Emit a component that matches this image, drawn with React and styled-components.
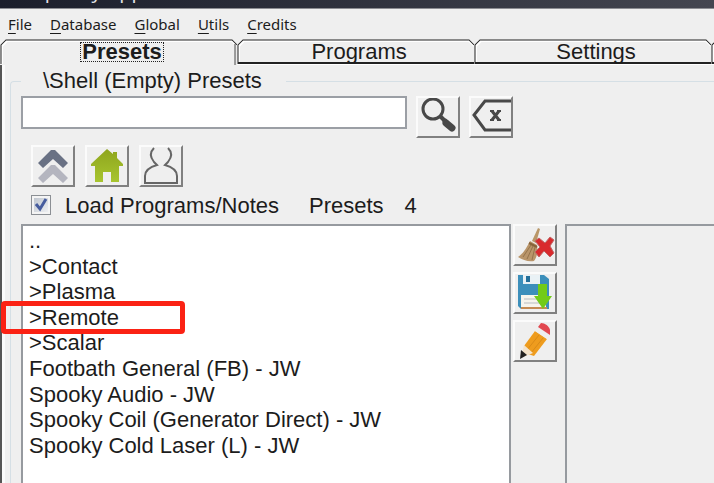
import React, { useState } from "react";
import styled, { createGlobalStyle } from "styled-components";

const GlobalStyle = createGlobalStyle`
  * {
    box-sizing: border-box;
  }
  body {
    margin: 0;
    background: #efefef;
    color: #1c1c1c;
    font-family: "Liberation Sans", Arial, sans-serif;
    font-size: 22px;
    overflow: hidden;
  }
  button {
    font: inherit;
    color: inherit;
  }
`;

const Window = styled.div`
  display: flex;
  flex-direction: column;
  height: 100vh;
`;

const TitleBar = styled.header`
  display: flex;
  align-items: flex-end;
  flex: none;
  height: 9px;
  padding: 0 16px 6px;
  overflow: hidden;
  background: linear-gradient(to right, #1b1e2b, #444650);
  border-bottom: 1px solid #8c8d92;
  color: #e4e4e8;
  font-family: "Open Sans", sans-serif;
  font-size: 20px;
  line-height: 22px;
  white-space: pre;
`;

const MenuBar = styled.nav`
  display: flex;
  flex: none;
  height: 30px;
  padding: 0 8px;
  gap: 18px;
  align-items: center;
`;

const MenuItem = styled.button`
  padding: 0;
  border: 0;
  background: none;
  font-family: "Noto Sans", sans-serif;
  font-size: 15px;
  line-height: 20px;
  u {
    text-underline-offset: 3px;
  }
`;

const Tabs = styled.div`
  display: flex;
  flex: none;
  height: 26px;
  overflow: hidden;
`;

const TabButton = styled.button`
  position: relative;
  flex: 0 0 33.2%;
  height: 26px;
  padding: 0 0 0 7px;
  border: 0;
  background: none;
  font-weight: ${(p) => (p.$active ? "bold" : "normal")};
  span {
    position: relative;
    display: inline-block;
    height: 18px;
    padding: 0 1px;
    line-height: 18px;
    outline: ${(p) => (p.$active ? "1px dotted #222" : "none")};
  }
`;

const TabEdge = styled.svg`
  position: absolute;
  inset: 0;
  width: 100%;
  height: 100%;
`;

const Page = styled.main`
  display: flex;
  flex: 1;
  min-height: 0;
  padding: 4px 0 0 8px;
  border-left: 2px solid #555;
  box-shadow: inset 3px 0 #fafafa;
`;

const Group = styled.fieldset`
  display: flex;
  flex-direction: column;
  flex: 1;
  min-width: 0;
  margin: 0;
  padding: 0 0 0 10px;
  border: 1px solid #d5dfe5;
  border-width: 1px 0 0 1px;
  border-radius: 4px 0 0 0;
`;

const Legend = styled.legend`
  margin: 0;
  padding: 0 24px 0 22px;
  line-height: 24px;
`;

const SearchRow = styled.div`
  display: flex;
  gap: 9px;
  align-items: flex-start;
  padding-top: 3px;
`;

const SearchInput = styled.input`
  width: 55.7%;
  height: 33px;
  border: 2px solid #9b9fa5;
  background: #fff;
  font: inherit;
  outline: none;
`;

const IconButton = styled.button`
  display: flex;
  flex: none;
  width: 44px;
  height: 42px;
  padding: 0;
  align-items: center;
  justify-content: center;
  background: #efefef;
  border: 2px solid;
  border-color: #fbfbfb #808080 #808080 #fbfbfb;
`;

const ToolRow = styled.div`
  display: flex;
  gap: 10px;
  padding: 7px 0 0 10px;
`;

const OptionsRow = styled.div`
  display: flex;
  gap: 30px;
  padding: 6px 0 6px 10px;
  line-height: 25px;
`;

const CheckLabel = styled.label`
  display: flex;
  gap: 14px;
  align-items: center;
`;

const Checkbox = styled.input`
  appearance: none;
  flex: none;
  width: 20px;
  height: 20px;
  margin: 0 0 2px;
  border: 1px solid #8b8f94;
  box-shadow: inset 0 0 0 2px #f4f4f4;
  background: linear-gradient(135deg, #b9c0ca, #f4f5f7);
  &:checked {
    background: url("data:image/svg+xml,%3Csvg xmlns='http://www.w3.org/2000/svg' viewBox='0 0 18 18'%3E%3Cpath d='M4 8l4 5 6-10' fill='none' stroke='%23465c9e' stroke-width='3'/%3E%3C/svg%3E"),
      linear-gradient(135deg, #b9c0ca, #f4f5f7);
  }
`;

const Counter = styled.div`
  display: flex;
  gap: 21px;
`;

const Panels = styled.div`
  display: flex;
  flex: 1;
  min-height: 0;
`;

const ListPanel = styled.div`
  flex: 0 0 70.7%;
  padding: 2px 6px 0;
  background: #fff;
  border: 2px solid #969a9f;
  border-bottom: 0;
`;

const PresetList = styled.ul`
  display: grid;
  grid-auto-rows: 1fr;
  min-height: 230px;
  margin: 0;
  padding: 0;
  list-style: none;
`;

const PresetRow = styled.li`
  position: relative;
  display: flex;
  align-items: center;
`;

const PresetButton = styled.button`
  padding: 0;
  border: 0;
  background: none;
  line-height: 25px;
  white-space: nowrap;
`;

const Highlight = styled.span`
  position: absolute;
  left: -28px;
  top: -4px;
  width: 184px;
  height: 33px;
  border: 5px solid #fb2214;
  border-radius: 4px;
  pointer-events: none;
`;

const SideTools = styled.div`
  display: flex;
  flex-direction: column;
  flex: none;
  gap: 6px;
  padding: 0 8px 0 2px;
`;

const Notes = styled.section`
  flex: 1;
  border: 2px solid #969a9f;
  border-width: 2px 0 0 2px;
`;

const SearchIcon = () => (
  <svg width="40" height="38" viewBox="0 0 40 38" fill="none" stroke="#484848">
    <circle cx="15" cy="11" r="10" strokeWidth="3" />
    <path d="M22 18l5 5" strokeWidth="4" />
    <path d="M26 22l3 3" strokeWidth="5" />
    <path d="M28 25l6 5" strokeWidth="7" strokeLinecap="round" />
  </svg>
);

const ClearIcon = () => (
  <svg width="40" height="38" viewBox="0 0 40 38" fill="none" stroke="#484848">
    <path d="M40 3H14L3 17l11 15h26" strokeWidth="3" />
    <path d="M21 13l7 9M28 13l-7 9" strokeWidth="3" />
    <path d="M19 13h4M26 13h4M19 22h4M26 22h4" strokeWidth="2" />
  </svg>
);

const UpIcon = () => (
  <svg width="40" height="38" viewBox="0 0 40 38">
    <path d="M5 16L18 3h4l13 13-5 5-10-9-10 9z" fill="#697184" />
    <path d="M5 31l13-13h4l13 13-5 5-10-9-10 9z" fill="#b4b5bf" />
  </svg>
);

const HomeIcon = () => (
  <svg width="40" height="38" viewBox="0 0 40 38">
    <defs>
      <linearGradient id="home" x2="0" y2="1">
        <stop stopColor="#8ea51d" />
        <stop offset="1" stopColor="#a8c52f" />
      </linearGradient>
    </defs>
    <path d="M20 2l6 5V5h4v6l6 6v2h-4v16h-8V25h-8v10H8V19H4v-2z" fill="url(#home)" />
  </svg>
);

const UserIcon = () => (
  <svg width="40" height="38" viewBox="0 0 40 38" fill="none" stroke="#666" strokeWidth="2">
    <path d="M13 1c-4 4-4 9 0 14l3 3C9 20 4 23 4 29v7h32v-7c0-6-5-9-12-11l3-3c4-5 4-10 0-14" />
  </svg>
);

const BroomIcon = () => (
  <svg width="40" height="36" viewBox="0 0 40 36">
    <path d="M23 1l2 1-4 14-4-2z" fill="#b99768" />
    <path d="M15 14l7 4c1 7 0 12-3 16-6 1-11-1-16-4 6-4 9-10 12-16z" fill="#b9956a" />
    <path d="M16 18L8 30M18 19l-6 13M20 20l-3 13" stroke="#94734b" fill="none" />
    <path d="M14 16l8 4" stroke="#86633b" strokeWidth="2" />
    <path d="M20 14l4-3 6 5 5-6 4 3-4 6 4 7-4 4-6-6-5 6-4-5 5-5z" fill="#d92a2d" stroke="#c06666" />
  </svg>
);

const SaveIcon = () => (
  <svg width="40" height="38" viewBox="0 0 40 38">
    <path d="M3 1h26l5 4v30H6l-3-3z" fill="#3c8fbb" />
    <path d="M8 1h17v9H8z" fill="#e9f1f5" />
    <path d="M11 2h4v6h-4z" fill="#246f9a" />
    <path d="M6 21h25v13H6z" fill="#f7f5ed" />
    <path d="M9 25h16M9 29h16" stroke="#b9bdc0" />
    <path d="M6 34h26" stroke="#c58c54" strokeWidth="2" />
    <path d="M23 10h9v12h5l-9 13-9-13h4z" fill="#72cb18" />
  </svg>
);

const PencilIcon = () => (
  <svg width="40" height="38" viewBox="0 0 40 38">
    <path d="M20 9l12 8-13 17-6-2-4-8z" fill="#ee9c1e" />
    <path d="M24 13L12 28M28 16L16 31" stroke="#d98a18" />
    <path d="M20 9l3-4 12 8-3 4z" fill="#eee" />
    <path d="M23 5l3-4c4 0 8 3 9 7v5z" fill="#e24850" />
    <path d="M9 23l9 8-12 5z" fill="#f3e3cb" />
    <path d="M6 28l6 5-7 4z" fill="#222" />
  </svg>
);

const menus = ["File", "Database", "Global", "Utils", "Credits"];
const tabs = ["Presets", "Programs", "Settings", ""];
const presets = [
  "..",
  ">Contact",
  ">Plasma",
  ">Remote",
  ">Scalar",
  "Footbath General (FB) - JW",
  "Spooky Audio - JW",
  "Spooky Coil (Generator Direct) - JW",
  "Spooky Cold Laser (L) - JW",
];

function Tab({ label, active, onClick }) {
  return (
    <TabButton $active={active} onClick={onClick} aria-label={label || "More"}>
      <TabEdge viewBox="0 0 237 26" preserveAspectRatio="none" fill="none">
        <path d="M2 25V7l5-5h225l5 5" stroke="#fff" strokeWidth="2" />
        <path d="M1 25V6l5-5h226l5 5" stroke="#222" />
        {active && <path d="M235 5v21" stroke="#999" strokeWidth="2" />}
        {!active && <path d="M1 24h236" stroke="#222" strokeWidth="2" />}
        {!active && <path d="M0 26h237" stroke="#fff" strokeWidth="2" />}
      </TabEdge>
      {label && <span>{label}</span>}
    </TabButton>
  );
}

export default function App() {
  const [tab, setTab] = useState("Presets");

  return (
    <>
      <GlobalStyle />
      <Window>
        <TitleBar>{"\\  Spooky App"}</TitleBar>
        <MenuBar>
          {menus.map((name) => (
            <MenuItem key={name}>
              <u>{name[0]}</u>
              {name.slice(1)}
            </MenuItem>
          ))}
        </MenuBar>
        <Tabs>
          {tabs.map((name) => (
            <Tab key={name} label={name} active={name === tab} onClick={() => setTab(name)} />
          ))}
        </Tabs>
        <Page>
          <Group>
            <Legend>\Shell (Empty) Presets</Legend>
            <SearchRow>
              <SearchInput type="text" aria-label="Search presets" />
              <IconButton aria-label="Search"><SearchIcon /></IconButton>
              <IconButton aria-label="Clear search"><ClearIcon /></IconButton>
            </SearchRow>
            <ToolRow>
              <IconButton aria-label="Up"><UpIcon /></IconButton>
              <IconButton aria-label="Home"><HomeIcon /></IconButton>
              <IconButton aria-label="User"><UserIcon /></IconButton>
            </ToolRow>
            <OptionsRow>
              <CheckLabel>
                <Checkbox type="checkbox" defaultChecked />
                Load Programs/Notes
              </CheckLabel>
              <Counter>
                <span>Presets</span>
                <span>4</span>
              </Counter>
            </OptionsRow>
            <Panels>
              <ListPanel>
                <PresetList>
                  {presets.map((name) => (
                    <PresetRow key={name}>
                      <PresetButton>{name}</PresetButton>
                      {name === ">Remote" && <Highlight />}
                    </PresetRow>
                  ))}
                </PresetList>
              </ListPanel>
              <SideTools>
                <IconButton aria-label="Delete"><BroomIcon /></IconButton>
                <IconButton aria-label="Save"><SaveIcon /></IconButton>
                <IconButton aria-label="Edit"><PencilIcon /></IconButton>
              </SideTools>
              <Notes aria-label="Notes" />
            </Panels>
          </Group>
        </Page>
      </Window>
    </>
  );
}
